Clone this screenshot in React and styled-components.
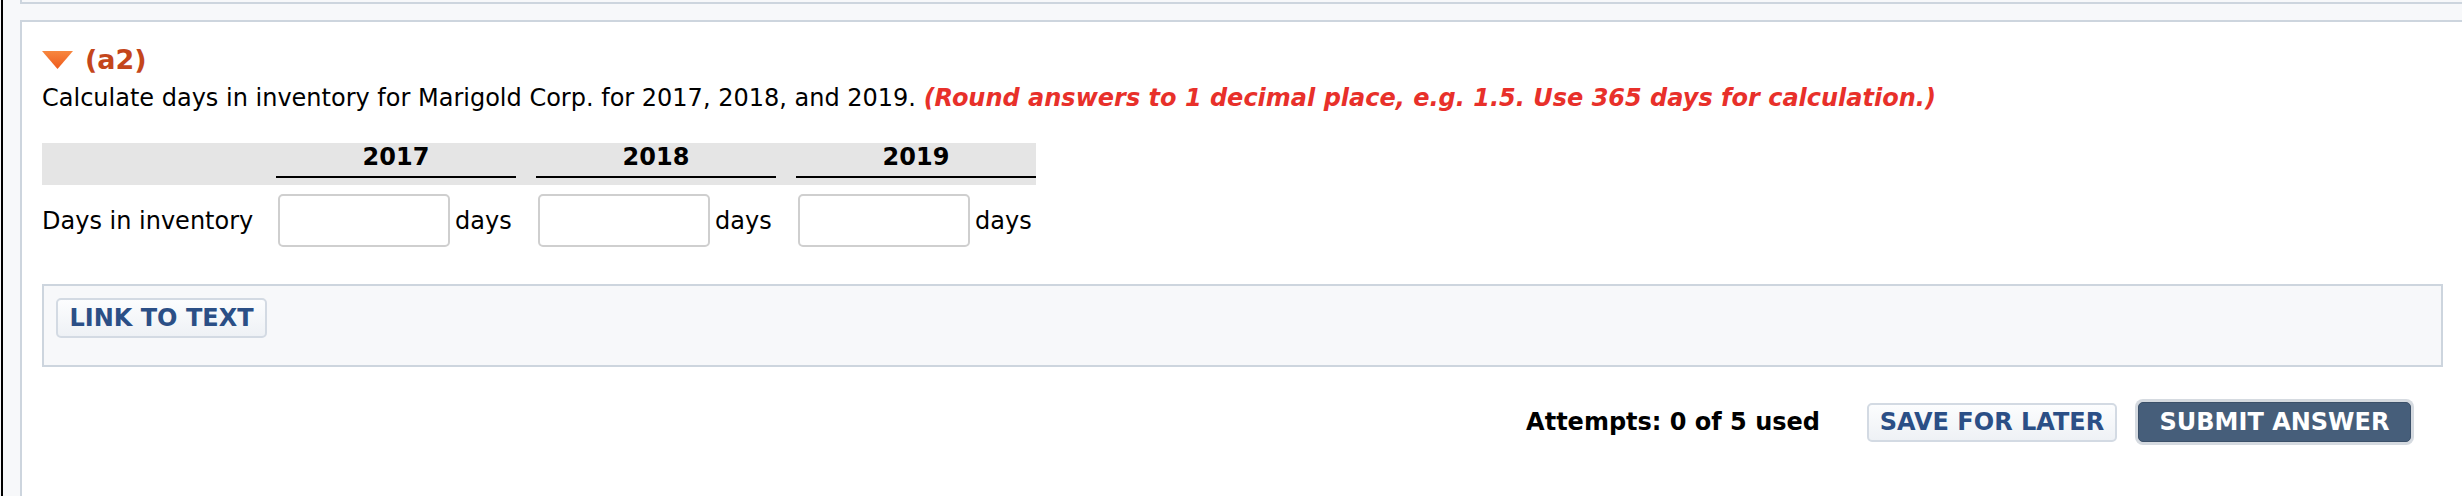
import React from 'react';
import styled, { createGlobalStyle } from 'styled-components';

const GlobalStyle = createGlobalStyle`
  html, body {
    margin: 0;
    padding: 0;
    background: #f7f8fa;
    overflow: hidden;
  }
  body {
    font-family: 'DejaVu Sans', Verdana, sans-serif;
    font-size: 24px;
    color: #000;
  }
`;

const Page = styled.div`
  height: 496px;
  margin-left: 1px;
  padding-left: 17px;
  border-left: 2px solid #000;
  overflow: hidden;
`;

const PrevPanel = styled.div`
  height: 2px;
  margin-right: -20px;
  margin-bottom: 16px;
  border: 2px solid #cdd5de;
  border-top: none;
  background: #f7f8fa;
`;

const Panel = styled.section`
  height: 470px;
  margin-right: -19px;
  padding: 25px 36px 0 20px;
  border: 2px solid #cdd5de;
  background: #fff;
  display: flex;
  flex-direction: column;
  box-sizing: content-box;
`;

const PartTitle = styled.h3`
  margin: 0;
  display: flex;
  align-items: center;
  gap: 12px;
  font-size: 27px;
  line-height: 26px;
  font-weight: bold;
  color: #c4461b;
`;

const Caret = styled.svg`
  width: 31px;
  height: 18px;
  flex: none;
`;

const Question = styled.p`
  margin: 13px 0 0;
  line-height: 24px;
`;

const Hint = styled.em`
  color: #e8302a;
  font-weight: bold;
`;

const Grid = styled.div`
  margin-top: 33px;
  width: 994px;
  display: grid;
  grid-template-columns: 214px repeat(3, 240px);
  column-gap: 20px;
`;

const HeadBand = styled.div`
  grid-column: 1 / -1;
  display: grid;
  grid-template-columns: subgrid;
  background: #e5e5e5;
  height: 42px;
`;

const HeadCell = styled.div`
  grid-column: ${(p) => p.$col};
  align-self: start;
  padding: 2px 0 7px;
  line-height: 24px;
  font-weight: bold;
  text-align: center;
  border-bottom: 2px solid #000;
`;

const RowLabel = styled.div`
  align-self: center;
  padding-top: 9px;
  white-space: nowrap;
`;

const Cell = styled.div`
  display: flex;
  align-items: center;
  gap: 5px;
  padding: 9px 0 0 2px;
`;

const Field = styled.input`
  width: 172px;
  height: 53px;
  box-sizing: border-box;
  border: 2px solid #cfcfcf;
  border-radius: 5px;
  background: #fff;
  font: inherit;
  padding: 0 8px;
`;

const LinkBox = styled.div`
  margin-top: 37px;
  height: 83px;
  box-sizing: border-box;
  padding: 12px 0 0 12px;
  border: 2px solid #cdd5de;
  background: #f7f8fa;
`;

const LightButton = styled.button`
  width: ${(p) => p.$w}px;
  height: 40px;
  padding: 0;
  border: 2px solid #d3dae3;
  border-radius: 5px;
  background: linear-gradient(#fcfdfe, #eef1f5);
  color: #2b4f86;
  font-family: inherit;
  font-size: 24px;
  font-weight: bold;
  cursor: pointer;
`;

const Footer = styled.div`
  margin-top: 35px;
  padding-right: 32px;
  display: flex;
  justify-content: flex-end;
  align-items: center;
`;

const Attempts = styled.span`
  font-weight: bold;
  margin-right: 47px;
`;

const SaveButton = styled(LightButton)`
  height: 39px;
  margin-right: 21px;
`;

const SubmitButton = styled.button`
  width: 273px;
  height: 40px;
  padding: 0;
  border: 1px solid #3b5069;
  border-radius: 5px;
  background: #465e7a;
  box-shadow: 0 0 0 3px #d5dae0;
  color: #fff;
  font-family: inherit;
  font-size: 24px;
  font-weight: bold;
  cursor: pointer;
`;

const years = ['2017', '2018', '2019'];

export default function App() {
  return (
    <>
      <GlobalStyle />
      <Page>
        <PrevPanel />
        <Panel>
          <PartTitle>
            <Caret viewBox="0 0 31 18">
              <defs>
                <linearGradient id="caretFill" x1="0" y1="0" x2="0" y2="1">
                  <stop offset="0" stopColor="#f7873f" />
                  <stop offset="1" stopColor="#ef5a1c" />
                </linearGradient>
              </defs>
              <path d="M0 0 H31 L15.5 18 Z" fill="url(#caretFill)" />
            </Caret>
            (a2)
          </PartTitle>
          <Question>
            Calculate days in inventory for Marigold Corp. for 2017, 2018, and 2019.{' '}
            <Hint>(Round answers to 1 decimal place, e.g. 1.5. Use 365 days for calculation.)</Hint>
          </Question>

          <Grid>
            <HeadBand>
              {years.map((y, i) => (
                <HeadCell key={y} $col={i + 2}>
                  {y}
                </HeadCell>
              ))}
            </HeadBand>
            <RowLabel>Days in inventory</RowLabel>
            {years.map((y) => (
              <Cell key={y}>
                <Field type="text" aria-label={`Days in inventory ${y}`} />
                days
              </Cell>
            ))}
          </Grid>

          <LinkBox>
            <LightButton $w={211}>LINK TO TEXT</LightButton>
          </LinkBox>

          <Footer>
            <Attempts>Attempts: 0 of 5 used</Attempts>
            <SaveButton $w={250}>SAVE FOR LATER</SaveButton>
            <SubmitButton>SUBMIT ANSWER</SubmitButton>
          </Footer>
        </Panel>
      </Page>
    </>
  );
}
